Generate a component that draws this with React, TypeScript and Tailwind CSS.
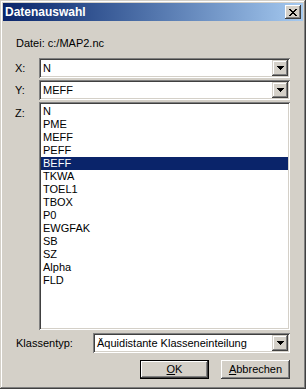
const items = ['N', 'PME', 'MEFF', 'PEFF', 'BEFF', 'TKWA', 'TOEL1', 'TBOX', 'P0', 'EWGFAK', 'SB', 'SZ', 'Alpha', 'FLD'];

const sunken = 'shadow-[inset_1px_1px_#808080,inset_-1px_-1px_#ffffff,inset_2px_2px_#404040,inset_-2px_-2px_#d4d0c8]';
const raised = 'shadow-[inset_-1px_-1px_#404040,inset_1px_1px_#d4d0c8,inset_-2px_-2px_#808080,inset_2px_2px_#ffffff]';
const button = 'shadow-[inset_-1px_-1px_#404040,inset_1px_1px_#ffffff,inset_-2px_-2px_#808080]';

function Arrow() {
  return (
    <svg width="7" height="4" viewBox="0 0 7 4" shapeRendering="crispEdges">
      <path d="M0 0h7v1H0zM1 1h5v1H1zM2 2h3v1H2zM3 3h1v1H3z" fill="#000" />
    </svg>
  );
}

function Combo({ value, className }: { value: string; className?: string }) {
  return (
    <div className={`h-[20px] bg-white flex items-center p-[2px] ${sunken} ${className ?? ''}`}>
      <span className="flex-1 pl-[2px] leading-[13px]">{value}</span>
      <div className={`w-[16px] h-[16px] bg-[#d4d0c8] flex items-center justify-center ${raised}`}>
        <Arrow />
      </div>
    </div>
  );
}

export default function App() {
  return (
    <div className="w-[306px] h-[389px] bg-[#d4d0c8] p-[3px] flex flex-col text-[11px] text-black font-['Liberation_Sans',Arial,sans-serif] shadow-[inset_-1px_-1px_#404040,inset_1px_1px_#d4d0c8,inset_-2px_-2px_#808080,inset_2px_2px_#ffffff]">
      <div className="h-[18px] bg-linear-to-r from-[#0a246a] to-[#a6caf0] flex items-center pl-[2px] pr-[2px]">
        <span className="font-bold text-white text-[12px] leading-[14px]">Datenauswahl</span>
        <div className={`ml-auto w-[16px] h-[14px] bg-[#d4d0c8] flex items-center justify-center ${button}`}>
          <svg width="8" height="7" viewBox="0 0 8 7" shapeRendering="crispEdges">
            <path d="M0 0h2v1H0zM6 0h2v1H6zM1 1h2v1H1zM5 1h2v1H5zM2 2h4v1H2zM3 3h2v1H3zM2 4h4v1H2zM1 5h2v1H1zM5 5h2v1H5zM0 6h2v1H0zM6 6h2v1H6z" fill="#000" />
          </svg>
        </div>
      </div>

      <div className="flex-1 flex flex-col pl-[12px] pr-[13px] pt-[16px] leading-[13px]">
        <div className="pl-[1px]">Datei: c:/MAP2.nc</div>

        <div className="mt-[8px] grid grid-cols-[24px_1fr] gap-y-[2px] items-center">
          <span>X:</span>
          <Combo value="N" />
          <span>Y:</span>
          <Combo value="MEFF" />
          <span className="self-start pt-[5px]">Z:</span>
          <div className={`h-[228px] bg-white p-[2px] ${sunken}`}>
            <div className="pt-[1px]">
              {items.map((it) => (
                <div
                  key={it}
                  className={`h-[13px] pl-[2px] leading-[13px] ${it === 'BEFF' ? 'bg-[#0a246a] text-white' : ''}`}
                >
                  {it}
                </div>
              ))}
            </div>
          </div>
        </div>

        <div className="mt-[3px] flex items-center">
          <span className="w-[78px] pl-[1px]">Klassentyp:</span>
          <Combo value="Äquidistante Klasseneinteilung" className="flex-1" />
        </div>

        <div className="mt-[7px] flex justify-end gap-[12px]">
          <div className="w-[69px] h-[19px] border border-black">
            <div className={`w-full h-full flex items-center justify-center ${button}`}>
              <span><span className="underline">O</span>K</span>
            </div>
          </div>
          <div className={`w-[69px] h-[19px] flex items-center justify-center ${button}`}>
            <span><span className="underline">A</span>bbrechen</span>
          </div>
        </div>
      </div>
    </div>
  );
}
